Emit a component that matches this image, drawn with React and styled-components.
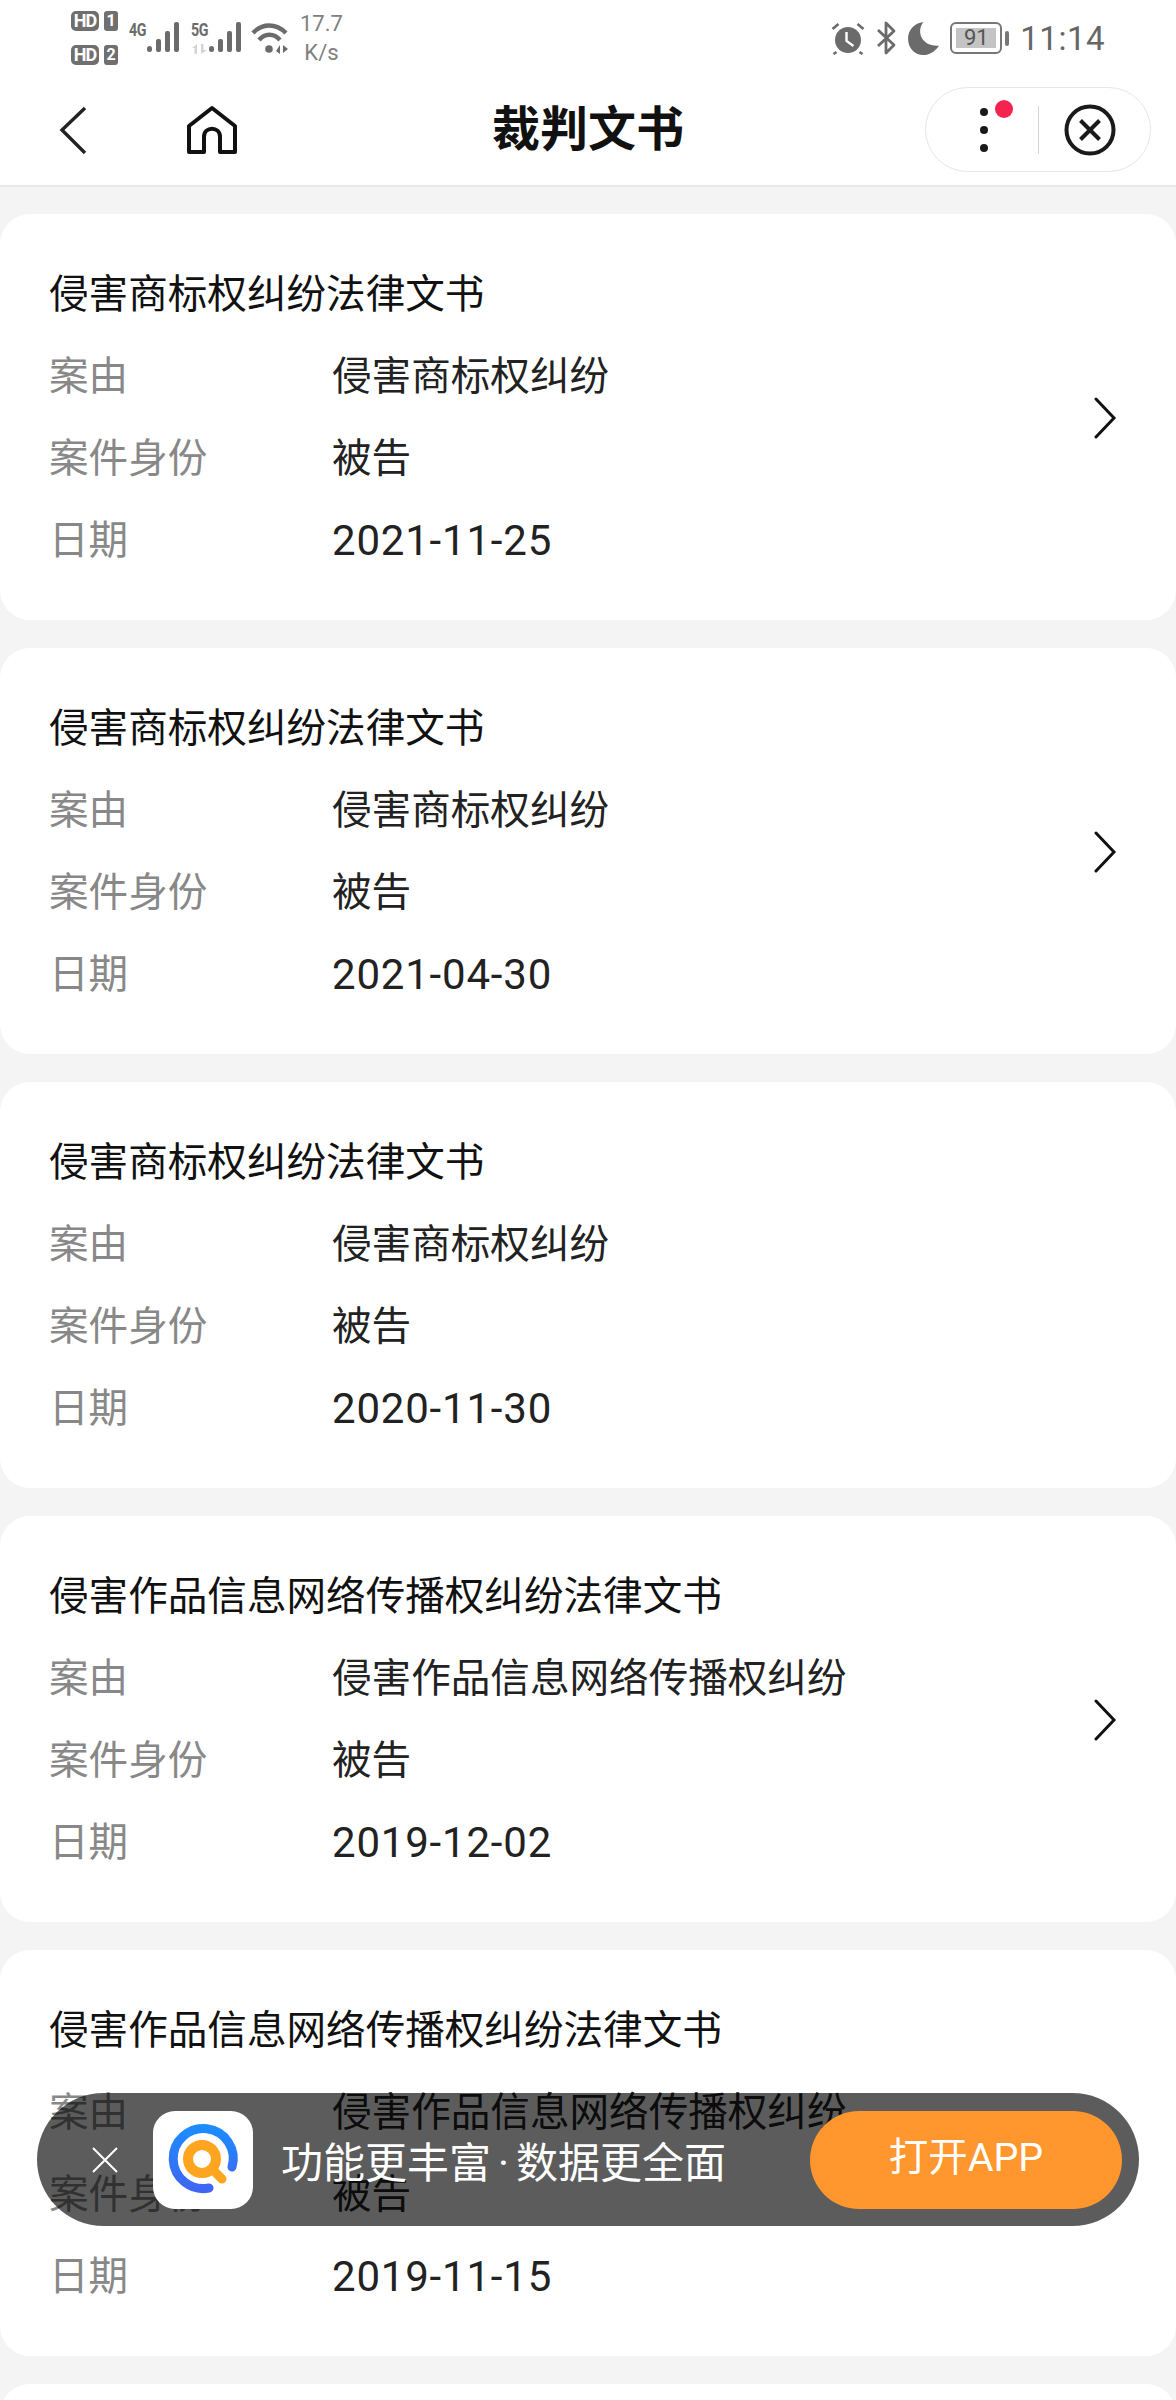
import React from 'react'
import styled, { createGlobalStyle } from 'styled-components'

const cards = [
  { title: '侵害商标权纠纷法律文书', cause: '侵害商标权纠纷', date: '2021-11-25', arrow: true },
  { title: '侵害商标权纠纷法律文书', cause: '侵害商标权纠纷', date: '2021-04-30', arrow: true },
  { title: '侵害商标权纠纷法律文书', cause: '侵害商标权纠纷', date: '2020-11-30' },
  { title: '侵害作品信息网络传播权纠纷法律文书', cause: '侵害作品信息网络传播权纠纷', date: '2019-12-02', arrow: true },
  { title: '侵害作品信息网络传播权纠纷法律文书', cause: '侵害作品信息网络传播权纠纷', date: '2019-11-15' },
]

export default function App() {
  return (
    <Page>
      <GlobalStyle />
      <StatusBar>
        <StatusGroup>
          <SimStack>
            <SimRow><Badge>HD</Badge><SimNo>1</SimNo></SimRow>
            <SimRow><Badge>HD</Badge><SimNo>2</SimNo></SimRow>
          </SimStack>
          <Signal label='4G' />
          <Signal label='5G' arrows />
          <WifiIcon />
          <Speed>
            <span>17.7</span>
            <span>K/s</span>
          </Speed>
        </StatusGroup>
        <StatusGroup>
          <AlarmIcon />
          <BluetoothIcon />
          <MoonIcon />
          <Battery>
            <BatteryBody>
              <BatteryFill />
              <BatteryText>91</BatteryText>
            </BatteryBody>
            <BatteryTip />
          </Battery>
          <Time>11:14</Time>
        </StatusGroup>
      </StatusBar>

      <Nav>
        <NavLeft>
          <svg width='30' height='48' viewBox='0 0 30 48'>
            <path d='M27 2 L4 24 L27 47' fill='none' stroke='#222' strokeWidth='3.4' />
          </svg>
          <svg width='50' height='50' viewBox='0 0 50 50'>
            <path
              d='M2 21 L25 3 L48 21 V47 H33 V32 C33 21 17 21 17 32 V47 H2 Z'
              fill='none'
              stroke='#111'
              strokeWidth='4'
              strokeLinejoin='round'
            />
          </svg>
        </NavLeft>
        <NavTitle>裁判文书</NavTitle>
        <Capsule>
          <MoreButton>
            <Dot /><Dot /><Dot />
            <RedDot />
          </MoreButton>
          <CapsuleLine />
          <svg width='52' height='52' viewBox='0 0 52 52'>
            <circle cx='26' cy='26' r='23.5' fill='none' stroke='#1a1a1a' strokeWidth='4' />
            <path d='M16.5 16.5 L35.5 35.5 M35.5 16.5 L16.5 35.5' stroke='#1a1a1a' strokeWidth='4' />
          </svg>
        </Capsule>
      </Nav>

      <List>
        {cards.map((c) => (
          <Card key={c.date}>
            <CardBody>
              <CardTitle>{c.title}</CardTitle>
              <Row><Label>案由</Label><Value>{c.cause}</Value></Row>
              <Row><Label>案件身份</Label><Value>被告</Value></Row>
              <Row><Label>日期</Label><DateValue>{c.date}</DateValue></Row>
            </CardBody>
            {c.arrow && (
              <svg width='24' height='42' viewBox='0 0 24 42'>
                <path d='M3 2 L21 21 L3 40' fill='none' stroke='#111' strokeWidth='3' strokeLinecap='round' />
              </svg>
            )}
          </Card>
        ))}
        <Card />
      </List>

      <Banner>
        <BannerClose>
          <svg width='26' height='26' viewBox='0 0 26 26'>
            <path d='M1 1 L25 25 M25 1 L1 25' stroke='#fff' strokeWidth='2' />
          </svg>
        </BannerClose>
        <AppIcon>
          <svg width='100' height='98' viewBox='0 0 100 98'>
            <defs>
              <linearGradient id='ring' x1='0' y1='0' x2='0' y2='1'>
                <stop offset='0' stopColor='#1c8cff' />
                <stop offset='1' stopColor='#3f66f2' />
              </linearGradient>
            </defs>
            <path
              d='M79 56 A30 30 0 1 0 56 77'
              fill='none'
              stroke='url(#ring)'
              strokeWidth='9'
              strokeLinecap='round'
            />
            <circle cx='49' cy='48' r='14' fill='none' stroke='#ffa51f' strokeWidth='10' />
            <path d='M60 59 L69 68' stroke='#ffa51f' strokeWidth='9' strokeLinecap='round' />
          </svg>
        </AppIcon>
        <BannerText>功能更丰富<Middot>·</Middot>数据更全面</BannerText>
        <OpenButton>打开APP</OpenButton>
      </Banner>
    </Page>
  )
}

function Signal({ label, arrows }) {
  return (
    <SignalWrap>
      <SignalSide>
        <SignalLabel>{label}</SignalLabel>
        {arrows && (
          <svg width='17' height='10' viewBox='0 0 17 10'>
            <path d='M6 0 V10 H3.5 V4 H1 Z M10 0 H12.5 V6 H16 L10 10 Z' fill='#d4d4d4' />
          </svg>
        )}
      </SignalSide>
      <svg width='33' height='32' viewBox='0 0 33 32'>
        <rect x='0' y='25' width='5' height='6' rx='2.5' fill='#6b6b6b' />
        <rect x='9' y='18' width='5' height='13' rx='2' fill='#6b6b6b' />
        <rect x='18' y='10' width='5' height='21' rx='2' fill='#6b6b6b' />
        <rect x='27' y='1' width='5' height='30' rx='2' fill='#6b6b6b' />
      </svg>
    </SignalWrap>
  )
}

function WifiIcon() {
  return (
    <Wifi width='38' height='34' viewBox='0 0 38 34'>
      <path d='M2 12 C11 2 25 2 35 12' fill='none' stroke='#6b6b6b' strokeWidth='4.4' />
      <path d='M8 19 C14 12 23 12 29 19' fill='none' stroke='#6b6b6b' strokeWidth='4.4' />
      <circle cx='18' cy='28' r='3.8' fill='#6b6b6b' />
      <path d='M29 24 V33 L25 30 Z M32 24 L37 28 L32 32 Z' fill='#6b6b6b' />
    </Wifi>
  )
}

function AlarmIcon() {
  return (
    <svg width='34' height='33' viewBox='0 0 33 33'>
      <circle cx='16.5' cy='18' r='13' fill='#6b6b6b' />
      <path d='M15 10 V19 L22 24' fill='none' stroke='#fff' strokeWidth='2.4' />
      <path d='M1 7 L7 2 M26 2 L32 7 M5 30 L2 32 M28 30 L31 32' stroke='#6b6b6b' strokeWidth='2.6' />
    </svg>
  )
}

function BluetoothIcon() {
  return (
    <svg width='21' height='34' viewBox='0 0 21 34'>
      <path d='M2 9 L18 24 L10 32 V2 L18 10 L2 25' fill='none' stroke='#6b6b6b' strokeWidth='2.8' strokeLinejoin='round' />
    </svg>
  )
}

function MoonIcon() {
  return (
    <svg width='31' height='33' viewBox='0 0 30 32'>
      <path d='M15 0 C8 8 12 24 30 23 C26 29 20 32 15 32 C6 32 0 25 0 16 C0 8 6 1 15 0 Z' fill='#6b6b6b' />
    </svg>
  )
}

const GlobalStyle = createGlobalStyle`
  html, body {
    margin: 0;
    padding: 0;
    background: #f4f4f4;
  }
  * {
    box-sizing: border-box;
  }
`

const Page = styled.div`
  position: relative;
  width: 1176px;
  height: 2400px;
  overflow: hidden;
  background: #f4f4f4;
  font-family: Roboto, 'Noto Sans CJK SC', sans-serif;
`

const StatusBar = styled.div`
  height: 76px;
  padding: 0 71px;
  display: flex;
  justify-content: space-between;
  align-items: center;
  background: #fff;
`

const StatusGroup = styled.div`
  display: flex;
  align-items: center;
  gap: 11px;
`

const SimStack = styled.div`
  display: flex;
  flex-direction: column;
  gap: 14px;
`

const SimRow = styled.div`
  display: flex;
  gap: 5px;
`

const Badge = styled.span`
  width: 28px;
  height: 20px;
  border-radius: 5px;
  background: #6f6f6f;
  color: #fff;
  font-size: 18px;
  font-weight: 700;
  line-height: 20px;
  text-align: center;
  letter-spacing: -1px;
`

const SimNo = styled(Badge)`
  width: 14px;
  border-radius: 3px;
  letter-spacing: 0;
  font-size: 16px;
`

const SignalWrap = styled.div`
  display: flex;
  align-items: flex-start;
  height: 34px;
`

const SignalSide = styled.div`
  width: 18px;
  display: flex;
  flex-direction: column;
  gap: 6px;
`

const SignalLabel = styled.span`
  font-size: 19px;
  line-height: 17px;
  font-weight: 700;
  color: #6b6b6b;
  letter-spacing: -0.5px;
  transform: scaleX(0.75);
  transform-origin: left center;
  white-space: nowrap;
`

const Wifi = styled.svg`
  margin-left: -2px;
`

const Speed = styled.div`
  display: flex;
  flex-direction: column;
  align-items: center;
  font-size: 22px;
  line-height: 29px;
  color: #808080;
`

const Battery = styled.div`
  display: flex;
  align-items: center;
  gap: 3px;
`

const BatteryBody = styled.div`
  position: relative;
  width: 52px;
  height: 32px;
  padding: 4px;
  border: 2px solid #777;
  border-radius: 6px;
`

const BatteryFill = styled.div`
  height: 100%;
  background: #c4c4c4;
`

const BatteryText = styled.span`
  position: absolute;
  inset: 0;
  text-align: center;
  font-size: 22px;
  line-height: 28px;
  color: #555;
`

const BatteryTip = styled.div`
  width: 4px;
  height: 15px;
  border-radius: 2px;
  background: #777;
`

const Time = styled.span`
  font-size: 33px;
  color: #666;
  letter-spacing: 0.5px;
`

const Nav = styled.div`
  position: relative;
  height: 111px;
  padding: 0 25px 2px 58px;
  display: flex;
  align-items: center;
  justify-content: space-between;
  background: #fff;
  border-bottom: 2px solid #e8e8e8;
`

const NavLeft = styled.div`
  display: flex;
  align-items: center;
  gap: 99px;
`

const NavTitle = styled.div`
  position: absolute;
  left: 0;
  right: 0;
  top: 19px;
  text-align: center;
  font-size: 48px;
  line-height: 70px;
  font-weight: 700;
  color: #111;
  pointer-events: none;
`

const Capsule = styled.div`
  width: 226px;
  height: 85px;
  padding: 0 34px 0 52px;
  display: flex;
  align-items: center;
  justify-content: space-between;
  border: 1px solid #e6e6e6;
  border-radius: 43px;
`

const MoreButton = styled.div`
  position: relative;
  display: flex;
  flex-direction: column;
  gap: 10px;
  margin-left: 2px;
`

const Dot = styled.span`
  width: 8px;
  height: 8px;
  border-radius: 50%;
  background: #1a1a1a;
`

const RedDot = styled.span`
  position: absolute;
  top: -8px;
  left: 15px;
  width: 18px;
  height: 18px;
  border-radius: 50%;
  background: #f5234f;
`

const CapsuleLine = styled.div`
  width: 1px;
  height: 48px;
  margin-left: 24px;
  background: #d4d4d4;
`

const List = styled.div`
  padding-top: 27px;
  display: flex;
  flex-direction: column;
  gap: 28px;
`

const Card = styled.div`
  flex: none;
  height: 406px;
  padding: 40px 59px 38px 49px;
  display: flex;
  align-items: center;
  justify-content: space-between;
  background: #fff;
  border-radius: 30px;
`

const CardBody = styled.div`
  font-size: 39.6px;
  line-height: 82px;
`

const CardTitle = styled.div`
  color: #111;
`

const Row = styled.div`
  display: grid;
  grid-template-columns: 283px 1fr;
`

const Label = styled.span`
  color: #888;
`

const Value = styled.span`
  color: #222;
`

const DateValue = styled(Value)`
  font-size: 42px;
  letter-spacing: 0.8px;
`

const Banner = styled.div`
  position: absolute;
  top: 2093px;
  left: 37px;
  width: 1102px;
  height: 133px;
  padding-right: 17px;
  display: flex;
  align-items: center;
  background: rgba(0, 0, 0, 0.64);
  border-radius: 67px;
`

const BannerClose = styled.div`
  width: 116px;
  display: flex;
  justify-content: center;
  padding-left: 19px;
`

const AppIcon = styled.div`
  width: 100px;
  height: 98px;
  border-radius: 22px;
  background: #fff;
`

const BannerText = styled.div`
  flex: 1;
  margin-left: 28px;
  font-size: 42px;
  color: #fff;
  white-space: nowrap;
`

const Middot = styled.span`
  margin: 0 7px;
`

const OpenButton = styled.div`
  width: 312px;
  height: 98px;
  border-radius: 49px;
  background: #ff962e;
  color: #fff;
  font-size: 39.5px;
  line-height: 94px;
  text-align: center;
`
